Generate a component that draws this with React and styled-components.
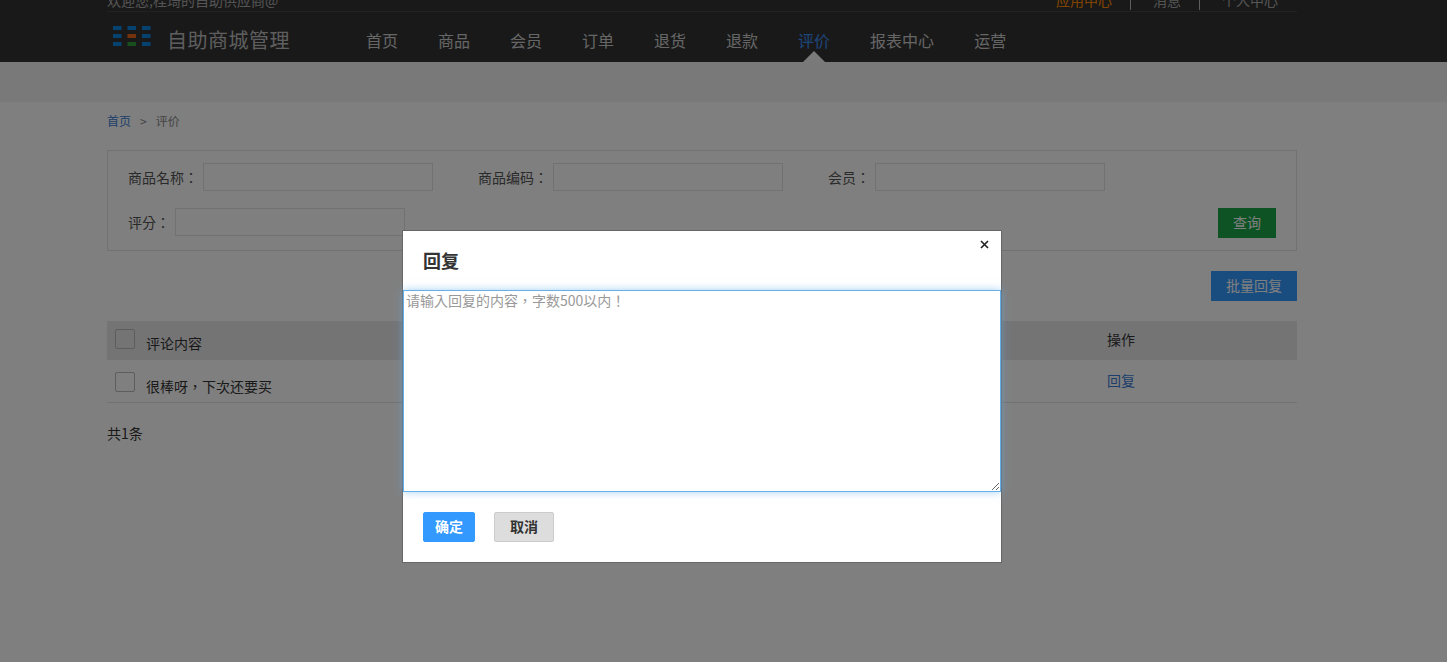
import React from 'react';
import styled, { createGlobalStyle } from 'styled-components';

const GlobalStyle = createGlobalStyle`
  html, body {
    margin: 0;
    padding: 0;
    height: 100%;
    overflow: hidden;
    background: #fff;
    font-family: "Noto Sans CJK SC", "Liberation Sans", sans-serif;
    font-size: 14px;
    color: #333;
  }
`;

const centredPunctuation = '"Noto Sans CJK TC", "Noto Sans CJK SC", sans-serif';

const Page = styled.div`
  height: 662px;
`;

const Header = styled.header`
  height: 62px;
  background: #333;
`;

const HeaderInner = styled.div`
  width: 1190px;
  margin-left: 107px;
`;

const TopBar = styled.div`
  height: 11px;
  overflow: hidden;
  border-bottom: 1px solid #444;
  display: flex;
  justify-content: space-between;
  align-items: flex-end;
  font-size: 14px;
  line-height: 20px;
  color: #aaa;
`;

const Welcome = styled.span`
  display: block;
  margin-bottom: 1px;
`;

const TopLinks = styled.div`
  display: flex;
  align-items: flex-end;
  padding-right: 19px;
  margin-bottom: 1px;
`;

const TopLink = styled.span`
  color: ${(props) => (props.$accent ? '#ff8a00' : '#aaa')};
`;

const TopDivider = styled.span`
  width: 1px;
  height: 12px;
  margin: 0 22px 0 18px;
  background: #bbb;
`;

const MainBar = styled.div`
  height: 50px;
  display: flex;
`;

const Brand = styled.div`
  width: 259px;
  display: flex;
  align-items: flex-start;
  padding-left: 6px;
  box-sizing: border-box;
`;

const LogoMark = styled.svg`
  width: 38px;
  height: 20px;
  margin-top: 14px;
`;

const BrandName = styled.span`
  margin: 14px 0 0 16px;
  font-size: 20px;
  line-height: 28px;
  letter-spacing: 0.5px;
  color: #bdbdbd;
  white-space: nowrap;
`;

const Nav = styled.nav`
  display: flex;
  gap: 40px;
`;

const NavItem = styled.a`
  position: relative;
  display: block;
  padding-top: 16px;
  height: 34px;
  font-size: 16px;
  line-height: 24px;
  color: ${(props) => (props.$active ? '#3b8cf0' : '#ccc')};

  ${(props) =>
    props.$active &&
    `&::after {
      content: '';
      position: absolute;
      left: 50%;
      bottom: 0;
      margin-left: -11px;
      border: 11px solid transparent;
      border-top: 0;
      border-bottom-color: #f5f5f5;
    }`}
`;

const Band = styled.div`
  height: 40px;
  background: #f3f3f4;
`;

const Content = styled.main`
  width: 1190px;
  margin-left: 107px;
`;

const Breadcrumb = styled.div`
  height: 48px;
  box-sizing: border-box;
  padding-bottom: 12px;
  display: flex;
  align-items: center;
  font-size: 12px;
  color: #888;
`;

const CrumbLink = styled.a`
  color: #3b7cd6;
`;

const CrumbSep = styled.span`
  margin: 0 9px;
`;

const FilterBox = styled.section`
  height: 101px;
  box-sizing: border-box;
  border: 1px solid #e3e3e3;
  padding: 12px 20px 0;
`;

const FilterRow = styled.div`
  display: flex;
  align-items: flex-start;
  margin-bottom: 17px;
`;

const Field = styled.label`
  display: flex;
  align-items: center;
  margin-right: 45px;
  line-height: 28px;
  color: #555;
  font-family: ${centredPunctuation};
`;

const TextInput = styled.input`
  width: 230px;
  height: 28px;
  box-sizing: border-box;
  margin-left: 5px;
  border: 1px solid #e3e3e3;
  background: #fff;
  padding: 0 4px;
`;

const FilterAction = styled.div`
  margin-left: auto;
`;

const Button = styled.button`
  display: block;
  box-sizing: border-box;
  width: ${(props) => props.$width}px;
  height: 30px;
  padding: 0 0 2px;
  border: 1px solid ${(props) => props.$border};
  border-radius: ${(props) => props.$radius || 0}px;
  background: ${(props) => props.$bg};
  color: ${(props) => props.$color || '#fff'};
  font: ${(props) => props.$weight || 400} 14px "Noto Sans CJK SC", sans-serif;
`;

const Toolbar = styled.div`
  display: flex;
  justify-content: flex-end;
  padding: 20px 0;
`;

const Row = styled.div`
  display: grid;
  grid-template-columns: 1000px 1fr;
  box-sizing: border-box;
  height: ${(props) => props.$height}px;
  background: ${(props) => (props.$head ? '#e9e9eb' : 'transparent')};
  border-bottom: ${(props) => (props.$head ? 'none' : '1px solid #e3e3e3')};
`;

const CommentCell = styled.div`
  display: flex;
  align-items: flex-start;
  padding: ${(props) => (props.$head ? '8px' : '12px')} 0 0 8px;
`;

const Checkbox = styled.span`
  display: block;
  flex: none;
  width: 20px;
  height: 20px;
  box-sizing: border-box;
  border: 1px solid #bbb;
  border-radius: 2px;
  background: transparent;
`;

const CellText = styled.span`
  margin: 4px 0 0 11px;
  line-height: 20px;
  color: #333;
  font-family: ${centredPunctuation};
`;

const ActionCell = styled.div`
  display: flex;
  align-items: center;
  padding-bottom: 3px;
  color: ${(props) => (props.$link ? '#3b7cd6' : '#333')};
`;

const Total = styled.div`
  margin-top: 20px;
  font-size: 14px;
  line-height: 20px;
`;

const Overlay = styled.div`
  position: fixed;
  inset: 0;
  background: rgba(0, 0, 0, 0.5);
`;

const Dialog = styled.div`
  position: absolute;
  left: 402px;
  top: 230px;
  width: 600px;
  height: 333px;
  box-sizing: border-box;
  border: 1px solid #666;
  background: #fff;
`;

const CloseButton = styled.svg`
  position: absolute;
  right: 12px;
  top: 9px;
  width: 9px;
  height: 9px;
`;

const DialogTitle = styled.h2`
  margin: 0;
  height: 59px;
  box-sizing: border-box;
  padding: 16px 0 0 20px;
  font-size: 18px;
  line-height: 26px;
  font-weight: 700;
  color: #333;
`;

const ReplyInput = styled.textarea`
  display: block;
  width: 598px;
  height: 202px;
  box-sizing: border-box;
  margin: 0;
  padding: 0 2px;
  border: 1px solid #66afe9;
  outline: none;
  box-shadow: 0 0 8px rgba(102, 175, 233, 0.6);
  font: 14px/18px ${centredPunctuation};
  color: #333;

  &::placeholder {
    color: #999;
    opacity: 1;
  }
`;

const DialogFooter = styled.div`
  display: flex;
  gap: 19px;
  padding: 20px 0 0 20px;
`;

const navItems = ['首页', '商品', '会员', '订单', '退货', '退款', '评价', '报表中心', '运营'];

const logoCells = [
  { x: 0, y: 0 }, { x: 14.5, y: 0 }, { x: 29, y: 0 },
  { x: 0, y: 8 }, { x: 14.5, y: 8, fill: '#e8651a' }, { x: 29, y: 8 },
  { x: 0, y: 16 }, { x: 14.5, y: 16, fill: '#2e9e3a' }, { x: 29, y: 16 },
];

export default function App() {
  return (
    <Page>
      <GlobalStyle />
      <Header>
        <HeaderInner>
          <TopBar>
            <Welcome>欢迎您,桂琦的自助供应商@</Welcome>
            <TopLinks>
              <TopLink $accent>应用中心</TopLink>
              <TopDivider />
              <TopLink>消息</TopLink>
              <TopDivider />
              <TopLink>个人中心</TopLink>
            </TopLinks>
          </TopBar>
          <MainBar>
            <Brand>
              <LogoMark viewBox="0 0 38 20">
                {logoCells.map((cell) => (
                  <rect
                    key={`${cell.x}-${cell.y}`}
                    x={cell.x}
                    y={cell.y}
                    width="8.5"
                    height="4"
                    fill={cell.fill || '#0a84e0'}
                  />
                ))}
              </LogoMark>
              <BrandName>自助商城管理</BrandName>
            </Brand>
            <Nav>
              {navItems.map((item) => (
                <NavItem key={item} $active={item === '评价'}>
                  {item}
                </NavItem>
              ))}
            </Nav>
          </MainBar>
        </HeaderInner>
      </Header>
      <Band />
      <Content>
        <Breadcrumb>
          <CrumbLink>首页</CrumbLink>
          <CrumbSep>&gt;</CrumbSep>
          <span>评价</span>
        </Breadcrumb>
        <FilterBox>
          <FilterRow>
            <Field>
              商品名称：
              <TextInput />
            </Field>
            <Field>
              商品编码：
              <TextInput />
            </Field>
            <Field>
              会员：
              <TextInput />
            </Field>
          </FilterRow>
          <FilterRow>
            <Field>
              评分：
              <TextInput />
            </Field>
            <FilterAction>
              <Button $width={58} $bg="#1aa648" $border="#1aa648">
                查询
              </Button>
            </FilterAction>
          </FilterRow>
        </FilterBox>
        <Toolbar>
          <Button $width={86} $bg="#3399ff" $border="#3399ff">
            批量回复
          </Button>
        </Toolbar>
        <Row $head $height={39}>
          <CommentCell $head>
            <Checkbox />
            <CellText>评论内容</CellText>
          </CommentCell>
          <ActionCell $head>操作</ActionCell>
        </Row>
        <Row $height={43}>
          <CommentCell>
            <Checkbox />
            <CellText>很棒呀，下次还要买</CellText>
          </CommentCell>
          <ActionCell $link>回复</ActionCell>
        </Row>
        <Total>共1条</Total>
      </Content>
      <Overlay>
        <Dialog>
          <CloseButton viewBox="0 0 9 9">
            <path d="M1 1l7 7M8 1l-7 7" stroke="#222" strokeWidth="1.6" fill="none" />
          </CloseButton>
          <DialogTitle>回复</DialogTitle>
          <ReplyInput placeholder="请输入回复的内容，字数500以内！" />
          <DialogFooter>
            <Button $width={52} $bg="#3399ff" $border="#3399ff" $radius={2} $weight={700}>
              确定
            </Button>
            <Button $width={60} $bg="#ddd" $border="#ccc" $radius={2} $color="#333" $weight={700}>
              取消
            </Button>
          </DialogFooter>
        </Dialog>
      </Overlay>
    </Page>
  );
}
